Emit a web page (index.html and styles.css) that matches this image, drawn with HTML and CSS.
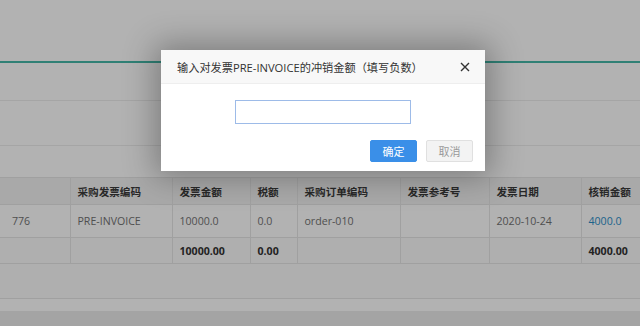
FILE: index.html
```html
<!DOCTYPE html>
<html lang="zh-CN">
<head>
<meta charset="utf-8">
<title>冲销金额</title>
<link rel="stylesheet" href="styles.css">
</head>
<body>
<div class="page">
  <div class="topbar"></div>
  <div class="form-row first"></div>
  <div class="form-row second"></div>
  <div class="gap"></div>
  <table class="grid">
    <colgroup>
      <col class="c1"><col class="c2"><col class="c3"><col class="c4"><col class="c5"><col class="c6"><col class="c7"><col class="c8">
    </colgroup>
    <thead>
      <tr>
        <th></th><th>采购发票编码</th><th>发票金额</th><th>税额</th><th>采购订单编码</th><th>发票参考号</th><th>发票日期</th><th>核销金额</th>
      </tr>
    </thead>
    <tbody>
      <tr class="data">
        <td class="lead">776</td><td>PRE-INVOICE</td><td>10000.0</td><td>0.0</td><td>order-010</td><td></td><td>2020-10-24</td><td><a class="link">4000.0</a></td>
      </tr>
      <tr class="total">
        <td></td><td></td><td>10000.00</td><td>0.00</td><td></td><td></td><td></td><td>4000.00</td>
      </tr>
    </tbody>
  </table>
  <div class="after"></div>
  <div class="band"></div>
  <div class="footer"></div>
</div>

<div class="shade"></div>

<div class="dialog">
  <div class="dialog-head">
    <span class="dialog-title">输入对发票PRE-INVOICE的冲销金额（填写负数）</span>
    <svg class="close" width="10" height="10" viewBox="0 0 10 10"><path d="M1 1L9 9M9 1L1 9" stroke="#333" stroke-width="1.4" fill="none"/></svg>
  </div>
  <div class="dialog-body">
    <input class="amount" type="text">
    <div class="actions">
      <button class="btn primary">确定</button>
      <button class="btn plain">取消</button>
    </div>
  </div>
</div>
</body>
</html>
```

FILE: styles.css
```css
html, body {
  margin: 0;
  padding: 0;
}
body {
  width: 640px;
  height: 326px;
  overflow: hidden;
  position: relative;
  background: #ffffff;
  font-family: "Open Sans", "Noto Sans CJK SC", sans-serif;
}
.page {
  display: flex;
  flex-direction: column;
  width: 640px;
  overflow: hidden;
}
.topbar {
  height: 61px;
  border-bottom: 2px solid #45b8a8;
  flex: none;
}
.form-row {
  flex: none;
  border-bottom: 1px solid #ececec;
}
.form-row.first { height: 37px; }
.form-row.second { height: 44px; }
.gap { height: 31px; flex: none; }

.grid {
  border-collapse: collapse;
  table-layout: fixed;
  width: 640px;
  font-size: 10.6px;
  flex: none;
}
.c1 { width: 70px; }
.c2 { width: 102px; }
.c3 { width: 78px; }
.c4 { width: 47px; }
.c5 { width: 103px; }
.c6 { width: 89px; }
.c7 { width: 92px; }
.c8 { width: 59px; }
.grid th, .grid td {
  border: 1px solid #e6e6e6;
  padding: 0 7px;
  text-align: left;
  white-space: nowrap;
  overflow: hidden;
}
.grid tr > :first-child { border-left: none; }
.grid tr > :last-child { border-right: none; }
.grid th {
  height: 26px;
  background: #f3f3f3;
  color: #3a3a3a;
  font-weight: 600;
}
.grid .data td {
  height: 32px;
  color: #727272;
}
.grid td.lead { padding-left: 12px; }
.grid .total td {
  height: 25px;
  color: #333;
  font-weight: 700;
  background: #fbfbfb;
}
.link { color: #2a8ec8; }

.after {
  height: 34px;
  background: #fbfbfb;
  border-bottom: 1px solid #e6e6e6;
  flex: none;
}
.band { height: 12px; background: #ffffff; flex: none; }
.footer { height: 30px; background: #ebebeb; flex: none; }

.shade {
  position: absolute;
  inset: 0;
  background: rgba(0, 0, 0, 0.3);
}

.dialog {
  position: absolute;
  left: 161px;
  top: 50px;
  width: 324px;
  height: 121px;
  background: #fff;
  box-shadow: 0 0 30px 6px rgba(0, 0, 0, 0.3);
  display: flex;
  flex-direction: column;
}
.dialog-head {
  height: 33px;
  background: #f8f8f8;
  border-bottom: 1px solid #eeeeee;
  display: flex;
  align-items: center;
  justify-content: space-between;
  padding: 0 15px 0 16px;
}
.dialog-title {
  font-size: 11.2px;
  color: #333;
}
.close { display: block; }
.dialog-body {
  flex: 1;
  display: flex;
  flex-direction: column;
  align-items: center;
  padding-top: 16px;
}
.amount {
  box-sizing: border-box;
  width: 176px;
  height: 24px;
  margin: 0;
  border: 1px solid #9dbbe8;
  outline: none;
  background: #fff;
}
.actions {
  align-self: stretch;
  display: flex;
  justify-content: flex-end;
  gap: 9px;
  padding-right: 12px;
  margin-top: 16px;
}
.btn {
  box-sizing: border-box;
  width: 47px;
  height: 22px;
  margin: 0;
  padding: 0;
  font-family: "Open Sans", "Noto Sans CJK SC", sans-serif;
  font-size: 11px;
  border-radius: 2px;
  cursor: pointer;
}
.btn.primary {
  background: #3a8fe8;
  border: 1px solid #3a8fe8;
  color: #fff;
}
.btn.plain {
  background: #f3f3f3;
  border: 1px solid #e0e0e0;
  color: #9a9a9a;
}
```
